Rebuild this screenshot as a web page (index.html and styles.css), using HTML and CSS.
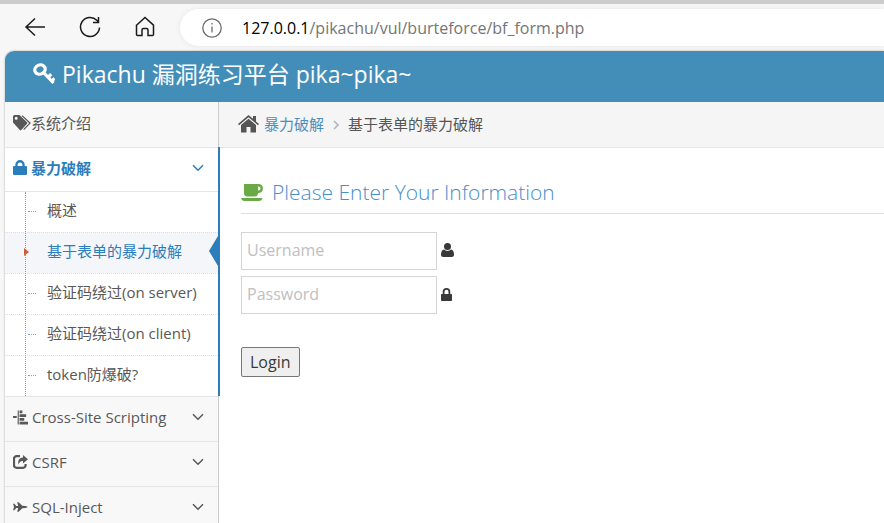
FILE: index.html
```html
<!DOCTYPE html>
<html lang="zh-CN">
<head>
<meta charset="utf-8">
<title>Pikachu 漏洞练习平台</title>
<link rel="stylesheet" href="styles.css">
</head>
<body>
<svg class="sprite" aria-hidden="true">
  <symbol id="chevron" viewBox="0 0 12 8"><path d="M1 1.200l5 5 5-5" fill="none" stroke="currentColor" stroke-width="1.500"/></symbol>
  <symbol id="lock" viewBox="0 0 14 15"><path d="M1 6h1.300V4.800a4.700 4.700 0 0 1 9.400 0V6H13a1 1 0 0 1 1 1v7a1 1 0 0 1-1 1H1a1 1 0 0 1-1-1V7a1 1 0 0 1 1-1zm3.600 0h4.800V4.800a2.400 2.400 0 0 0-4.800 0z" fill="currentColor" fill-rule="evenodd"/></symbol>
</svg>
<div class="toolbar">
  <button class="tool" aria-label="Back"><svg width="22" height="20" viewBox="0 0 22 20"><path d="M21 10H2M11 1.500L2 10l9 8.500" /></svg></button>
  <button class="tool" aria-label="Refresh"><svg width="22" height="22" viewBox="0 0 22 22"><path d="M20.500 11.500A9.500 9.500 0 1 1 17.800 4.300L19.500 6M19.500 1v5.500H14"/></svg></button>
  <button class="tool" aria-label="Home"><svg width="20" height="21" viewBox="0 0 20 21"><path d="M1.500 9.200L10 1.500l8.500 7.700v9.300a1 1 0 0 1-1 1H13v-5.500a1.500 1.500 0 0 0-1.500-1.500h-3A1.500 1.500 0 0 0 7 14v5.500H2.500a1 1 0 0 1-1-1z"/></svg></button>
  <div class="address">
    <svg width="20" height="20" viewBox="0 0 20 20"><circle cx="10" cy="10" r="9.200"/><path d="M10 8.500v6M10 5v1.600"/></svg>
    <span class="url"><b>127.0.0.1</b>/pikachu/vul/burteforce/bf_form.php</span>
  </div>
</div>
<div class="page">
  <header class="navbar">
    <svg width="22" height="22" viewBox="0 0 22 22"><g fill="none" stroke="currentColor"><ellipse cx="7" cy="6.500" rx="5.300" ry="4.600" stroke-width="3.200" transform="rotate(-25 7 6.500)"/><path d="M10.500 9.500l10 10.500M14.800 14.500l3.400-3.400M18.500 18.300l3-3" stroke-width="3.200"/></g></svg>
    <h1>Pikachu 漏洞练习平台 pika~pika~</h1>
  </header>
  <div class="columns">
    <nav class="sidebar">
      <ul class="menu">
        <li><a href="#"><svg width="18" height="16" viewBox="0 0 18 16"><path d="M0 1.500A1.500 1.500 0 0 1 1.500 0H6.500L14 7.300a1 1 0 0 1 0 1.500L8.300 15a1 1 0 0 1-1.500 0L0 7.500zM3.200 1.800a1.500 1.500 0 1 0 0 3 1.500 1.500 0 0 0 0-3z" fill="currentColor" fill-rule="evenodd"/><path d="M9 .6l8 7.500-6.300 6.500" fill="none" stroke="currentColor" stroke-width="1.300"/></svg><span>系统介绍</span></a></li>
        <li class="open">
          <a href="#"><svg width="14" height="15"><use href="#lock"/></svg><span>暴力破解</span><svg class="arrow" width="12" height="8"><use href="#chevron"/></svg></a>
          <ul class="submenu">
            <li><a href="#">概述</a></li>
            <li class="active"><a href="#">基于表单的暴力破解</a></li>
            <li><a href="#">验证码绕过(on server)</a></li>
            <li><a href="#">验证码绕过(on client)</a></li>
            <li><a href="#">token防爆破?</a></li>
          </ul>
        </li>
        <li><a href="#"><svg width="15" height="15" viewBox="0 0 16 15"><path d="M0 6h4v2H0zM5 0h1.200v15H5zM7 0h3v3H7zM7 4h7v3H7zM7 8h5v3H7zM7 12h9v3H7z" fill="currentColor"/></svg><span>Cross-Site Scripting</span><svg class="arrow" width="12" height="8"><use href="#chevron"/></svg></a></li>
        <li><a href="#"><svg width="15" height="14" viewBox="0 0 15 14"><path d="M7 1.200H3.500A2.500 2.500 0 0 0 1 3.700v6.600a2.500 2.500 0 0 0 2.500 2.500h6.600a2.500 2.500 0 0 0 2.500-2.500V9" fill="none" stroke="currentColor" stroke-width="2.200"/><path d="M10 0l5 4.300-5 4.200V6C7.500 6 6.500 7 5.500 9.500 4.500 5.500 6.500 2.800 10 2.600z" fill="currentColor"/></svg><span>CSRF</span><svg class="arrow" width="12" height="8"><use href="#chevron"/></svg></a></li>
        <li><a href="#"><svg width="15" height="10" viewBox="0 0 16 10"><path d="M0 1.500h1.500L3.500 4h2L4.500 0H6l4 3.700 3.500.3 2.500 1-2.500 1-3.500.3L6 10H4.500l1-4h-2l-2 2.500H0l1-3v-1z" fill="currentColor"/></svg><span>SQL-Inject</span><svg class="arrow" width="12" height="8"><use href="#chevron"/></svg></a></li>
      </ul>
    </nav>
    <main class="content">
      <div class="breadcrumbs">
        <svg width="21" height="18" viewBox="0 0 21 18"><path d="M0 9L10.500 0 15 3.800V1h3v5.400L21 9l-1 1.200-9.500-8-9.500 8z" fill="currentColor"/><path d="M3 10l7.500-6.300L18 10v7.500h-5.500V12h-4v5.500H3z" fill="currentColor"/></svg>
        <a href="#">暴力破解</a>
        <svg class="sep" width="6" height="10" viewBox="0 0 6 10"><path d="M1 1l4 4-4 4" fill="none" stroke="currentColor" stroke-width="1.600"/></svg>
        <span>基于表单的暴力破解</span>
      </div>
      <form class="login">
        <h2><svg width="22" height="17" viewBox="0 0 22 17"><path d="M3 0h14.500a4.500 4.500 0 0 1 0 9H17a3.500 3.500 0 0 1-3.500 3.500h-7A3.500 3.500 0 0 1 3 9zm14 2.500v4h.5a2 2 0 0 0 0-4zM0 14h21.500q-.8 3-3.500 3H3.500Q.8 17 0 14z" fill="currentColor" fill-rule="evenodd"/></svg>Please Enter Your Information</h2>
        <label><input type="text" placeholder="Username" aria-label="Username"><svg width="13" height="14" viewBox="0 0 13 14"><path d="M6.500 0a3.500 3.500 0 1 1 0 7 3.500 3.500 0 0 1 0-7zM3 6.500a5 5 0 0 0 7 0c2 0 3 2.500 3 5A2.300 2.300 0 0 1 10.800 14H2.200A2.300 2.300 0 0 1 0 11.500c0-2.500 1-5 3-5z" fill="currentColor"/></svg></label>
        <label><input type="password" placeholder="Password" aria-label="Password"><svg width="11" height="13" viewBox="0 0 11 13"><path d="M.8 6h.9V3.800a3.800 3.800 0 0 1 7.600 0V6h.9a.8.8 0 0 1 .8.800v5.400a.8.8 0 0 1-.8.800H.8a.8.8 0 0 1-.8-.8V6.800A.8.8 0 0 1 .8 6zm2.700 0h4V3.800a2 2 0 0 0-4 0z" fill="currentColor" fill-rule="evenodd"/></svg></label>
        <button class="submit" type="button">Login</button>
      </form>
    </main>
  </div>
</div>
</body>
</html>
```
FILE: styles.css
```css
* { box-sizing: border-box; }
body {
  margin: 0;
  min-height: 100vh;
  display: flex;
  flex-direction: column;
  background: #f7f7f7;
  color: #393939;
  font: 15px/22px "Open Sans", "Noto Sans CJK SC", sans-serif;
  overflow: hidden;
}
ul { list-style: none; margin: 0; padding: 0; }
a { text-decoration: none; color: inherit; }
svg { flex: none; }
.sprite { position: absolute; width: 0; height: 0; }

.toolbar {
  display: flex;
  align-items: center;
  height: 51px;
  padding-left: 7px;
  border-top: 4px solid #ccc;
  background: #f7f7f7;
}
.tool {
  display: grid;
  place-items: center;
  width: 55px;
  height: 38px;
  padding: 0 0 2px;
  border: 0;
  background: none;
}
.tool svg { fill: none; stroke: #1b1b1b; stroke-width: 1.5; }
.address {
  display: flex;
  flex: 1;
  align-items: center;
  gap: 20px;
  height: 37px;
  margin-left: 8px;
  padding-left: 22px;
  border-radius: 19px 0 0 19px;
  background: #fff;
  box-shadow: 0 0 5px #e4e4e4;
}
.address svg { fill: none; stroke: #6c6c6c; stroke-width: 1.3; }
.url { font-size: 16px; color: #757575; }
.url b { font-weight: 400; color: #000; }

.page {
  display: flex;
  flex: 1;
  flex-direction: column;
  margin-left: 5px;
  border-radius: 9px 0 0 0;
  background: #fff;
  box-shadow: 0 0 2px #999;
  overflow: hidden;
}
.navbar {
  display: flex;
  align-items: center;
  gap: 7px;
  height: 51px;
  padding: 0 0 5px 28px;
  background: #438eb9;
  color: #fff;
}
.navbar h1 { margin: 0; font-size: 23px; line-height: 32px; font-weight: 400; }

.columns { display: flex; flex: 1; }
.sidebar {
  flex: none;
  width: 214px;
  border-right: 1px solid #ccc;
  background: #f2f2f2;
  color: #585858;
}
.menu > li { border-bottom: 1px solid #e5e5e5; }
.menu > li > a {
  display: flex;
  align-items: center;
  gap: 4px;
  height: 44px;
  padding: 0 14px 4px 8px;
  background: #f8f8f8;
}
.menu > li:first-child > a { height: 45px; gap: 0; }
.arrow { margin-left: auto; }
.menu > .open { position: relative; }
.menu > .open::after {
  content: "";
  position: absolute;
  top: -1px;
  right: -2px;
  bottom: 0;
  width: 2px;
  background: #2b7dbc;
}
.menu > .open > a {
  height: 43px;
  background: #fff;
  color: #2b7dbc;
  font-weight: 700;
}
.submenu {
  position: relative;
  border-top: 1px solid #e5e5e5;
  background: #fff;
}
.submenu::before {
  content: "";
  position: absolute;
  top: 0;
  bottom: 0;
  left: 20px;
  z-index: 1;
  border-left: 1px dotted #7ba3c4;
}
.submenu li { position: relative; }
.submenu li + li { border-top: 1px dotted #ddd; }
.submenu a { display: block; padding: 7px 0 11px 42px; }
.submenu li::before {
  content: "";
  position: absolute;
  left: 23px;
  top: 19px;
  width: 8px;
  border-top: 1px dotted #7ba3c4;
}
.submenu .active { background: #f4f6fa; color: #2b7dbc; }
.submenu .active::before {
  left: 19px;
  top: 14px;
  z-index: 2;
  width: 5px;
  height: 10px;
  border: 0;
  background: #c86139;
  clip-path: polygon(0 10%, 100% 50%, 0 90%);
}
.submenu .active::after {
  content: "";
  position: absolute;
  right: 0;
  top: 3px;
  width: 9px;
  height: 30px;
  background: #2b7dbc;
  clip-path: polygon(100% 0, 0 50%, 100% 100%);
}

.content { flex: 1; }
.breadcrumbs {
  display: flex;
  align-items: center;
  height: 46px;
  padding: 0 19px 2px;
  border-bottom: 1px solid #e5e5e5;
  background: #f5f5f5;
  color: #555;
}
.breadcrumbs a { margin-left: 5px; color: #4c8fbd; }
.sep { margin: 2px 9px 0; color: #b2b6bf; }
.login {
  display: flex;
  flex-direction: column;
  align-items: flex-start;
  padding: 29px 0 0 22px;
}
.login h2 {
  display: flex;
  align-items: center;
  align-self: stretch;
  gap: 9px;
  margin: 0 0 18px;
  padding-bottom: 5px;
  border-bottom: 1px solid #d5e3ef;
  color: #478fca;
  font-size: 21px;
  line-height: 31px;
  font-weight: 300;
}
.login h2 svg { color: #69aa46; }
.login label {
  display: flex;
  align-items: center;
  gap: 4px;
  margin-bottom: 6px;
}
.login label svg { margin-bottom: 2px; }
.login input {
  width: 196px;
  height: 38px;
  padding: 4px 5px 6px;
  border: 1px solid #d5d5d5;
  background: #fff;
  color: #393939;
  font: 16px/24px "Open Sans", sans-serif;
}
.login input::placeholder { color: #c0c0c0; }
.submit {
  height: 30px;
  margin-top: 27px;
  padding: 0 8px;
  border: 1px solid #767676;
  border-radius: 2px;
  background: #efefef;
  color: #393939;
  font: 16px/24px "Open Sans", sans-serif;
}
```
